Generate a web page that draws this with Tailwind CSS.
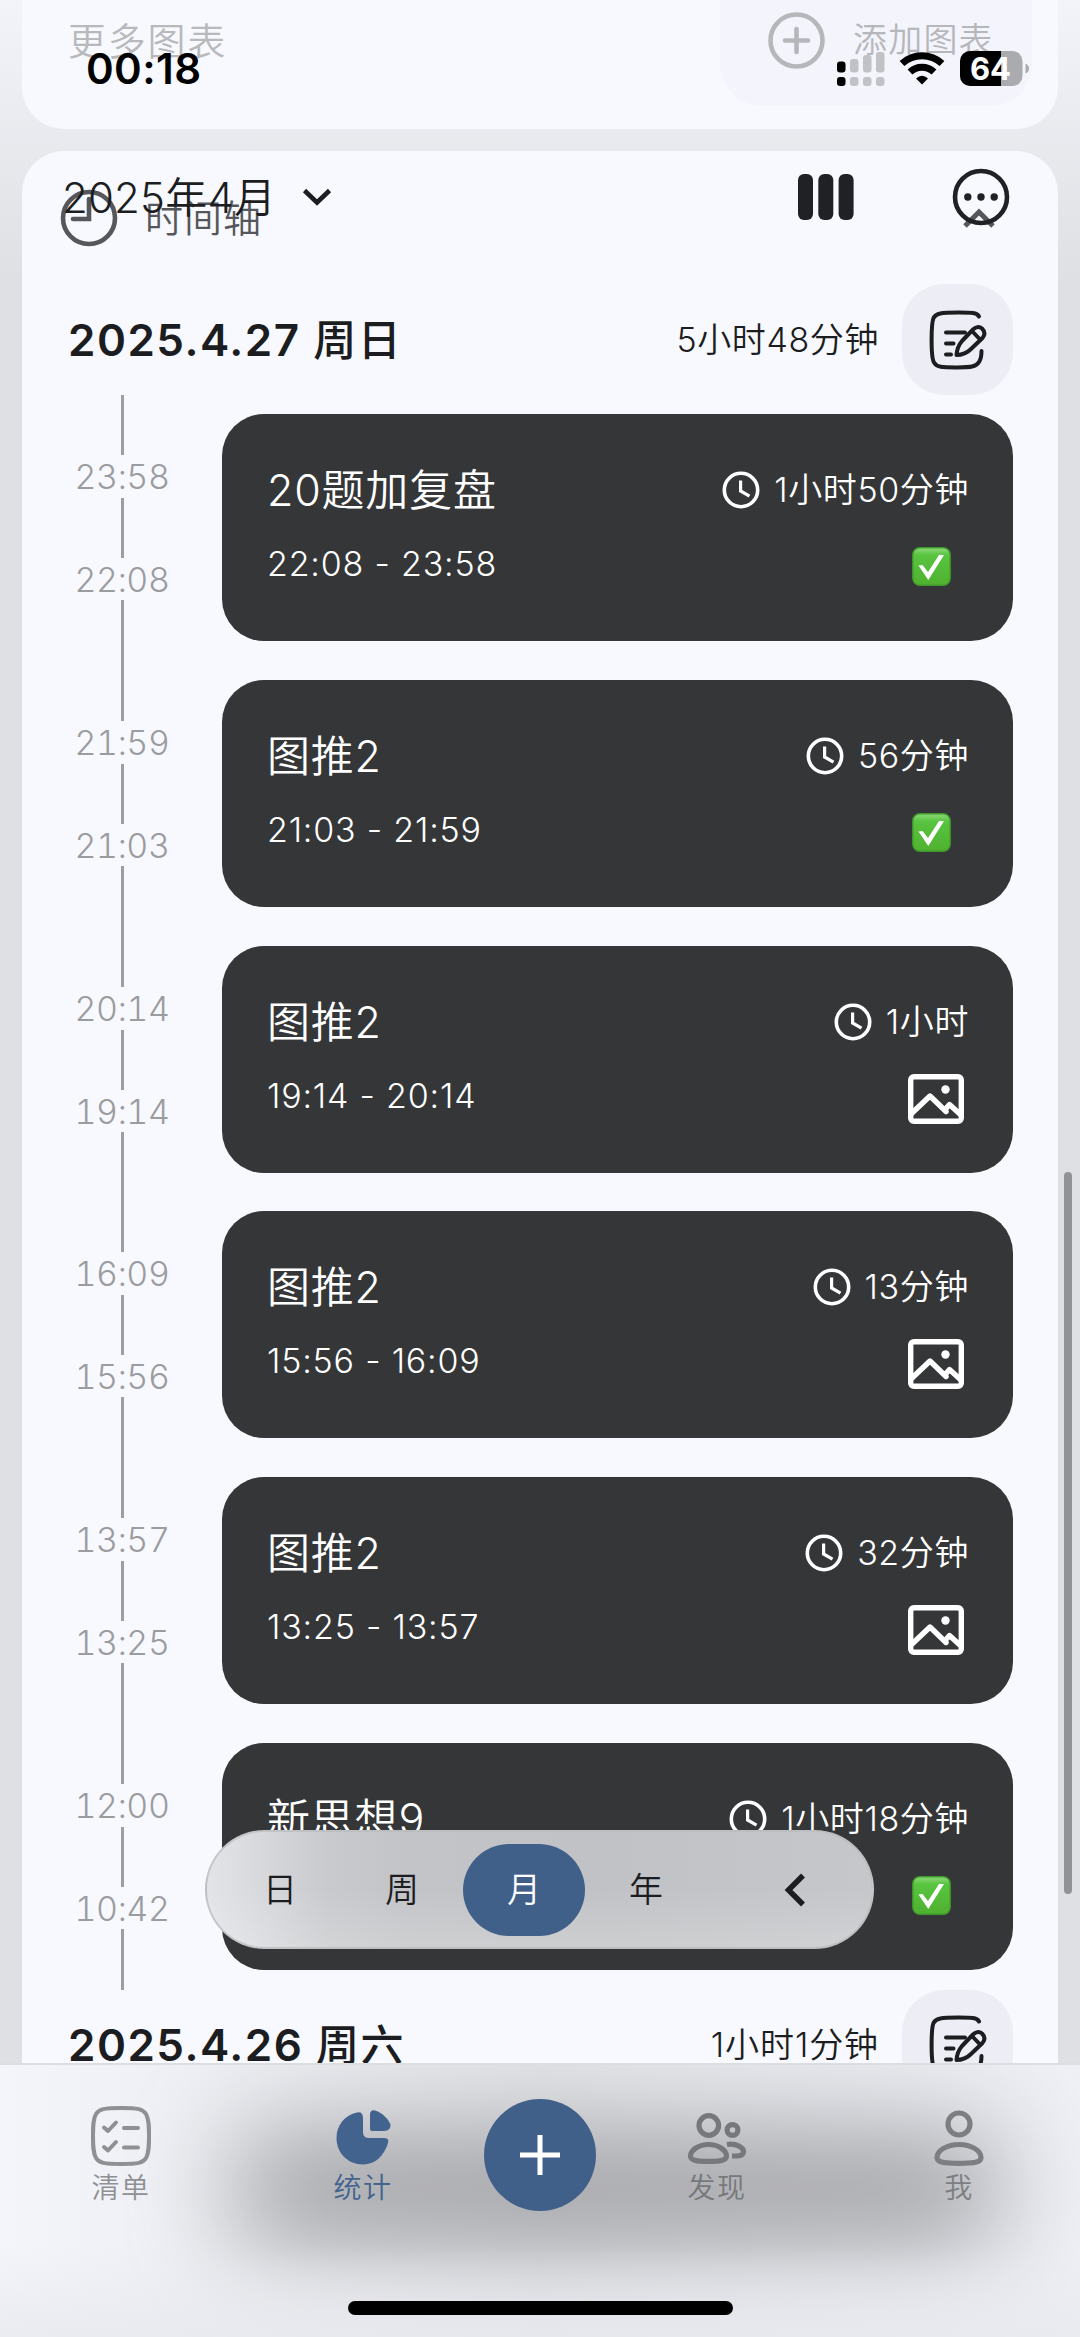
<!DOCTYPE html>
<html lang="zh-CN">
<head>
<meta charset="utf-8">
<meta name="viewport" content="width=device-width">
<title>统计</title>
<script src="https://cdn.jsdelivr.net/npm/@tailwindcss/browser@4"></script>
</head>
<body class="bg-[#dfe0e4]">
<svg class="absolute size-0">
  <defs><linearGradient id="cg" x1="0" y1="0" x2="0" y2="1"><stop offset="0" stop-color="#8fd97d"/><stop offset=".2" stop-color="#58c440"/><stop offset="1" stop-color="#4fb12f"/></linearGradient></defs>
  <symbol id="clock" viewBox="0 0 38 38"><g fill="none" stroke="currentColor" stroke-width="3.6"><circle cx="19" cy="19" r="16.7"/><path d="M18.6 9.5V20L27.5 25.2" stroke-width="3.2"/></g></symbol>
  <symbol id="image" viewBox="0 0 56 50"><g fill="none" stroke="currentColor" stroke-width="5.4"><rect x="2.7" y="2.7" width="50.6" height="44.6" rx="3.2"/><path d="M3 40L22 22L38 37.5" stroke-linejoin="round" stroke-linecap="round"/><path d="M38 34.5L41.5 30.5L53 41" stroke-linejoin="round"/></g><circle cx="37.5" cy="15.5" r="4.2" fill="currentColor"/></symbol>
  <symbol id="check" viewBox="0 0 39 39"><rect x=".8" y=".8" width="37.4" height="37.4" rx="7" fill="url(#cg)" stroke="#3f9a2a" stroke-width="1.4"/><path d="M6.5 18.5L10.5 18L16 25L27 8H32L16.3 33Z" fill="#fff"/></symbol>
  <symbol id="note" viewBox="0 0 58 60"><g fill="none" stroke="currentColor" stroke-width="4" stroke-linecap="round" stroke-linejoin="round"><path d="M50 6.5C48 2.5 42 2.6 29 2.6C12 2.6 7 3 4.500 8C2.800 12 2.600 20 2.600 30C2.600 40 2.800 49 5 52.500C8 57.500 13 57.400 28 57.400C42 57.400 47 57 50 52C52 49 52.500 45 52.500 41"/><path d="M17 22.500H36M17 33.500H24.500M17 44.500H22"/><path d="M27.500 45C28 38 30 34.500 33 31L44 19.500C46.500 17 50 16 53 18.500C56 21.500 56 25 53.500 28L42 39C38 43 34 45 27.500 45ZM43 21L51.500 30"/></g></symbol>
</svg>

<div class="relative h-[2337px] w-[1080px] overflow-hidden bg-linear-to-b from-[#f3f4f9] from-0% via-[#dfe0e4] via-12% to-[#dfe0e4] font-[Inter,'Noto_Sans_CJK_SC',sans-serif] text-[#1c1d21]">

  <!-- scrolling content -->
  <main class="flex flex-col gap-[22px] px-[22px]">
    <section class="flex h-[129px] items-start justify-between rounded-b-[42px] bg-[#f8f9fe] pr-[26px] pl-[46px]">
      <h2 class="mt-[20px] text-[38px] leading-[42px] font-[350] tracking-[1.8px] text-[#b8b9bd]">更多图表</h2>
      <div class="flex h-[106px] w-[312px] items-start gap-[28px] rounded-b-[42px] bg-[#f3f4fc] pl-[48px] text-[#b6b7bb]">
        <svg class="mt-[12px] size-[57px] shrink-0" viewBox="0 0 57 57" fill="none" stroke="currentColor" stroke-linecap="round"><circle cx="28.500" cy="28.500" r="26" stroke-width="4.600"/><path d="M28.500 17V40M17 28.500H40" stroke-width="4.600"/></svg>
        <span class="mt-[19px] text-[34px] leading-[42px] font-[350] tracking-[1.2px] whitespace-nowrap">添加图表</span>
      </div>
    </section>

    <section class="rounded-t-[42px] bg-[#f8f9fe]">
      <div class="flex h-[133px] items-start pl-[38px] text-[#55575b]">
        <svg class="mt-[38px] size-[58px]" viewBox="0 0 58 58" fill="none" stroke="currentColor" stroke-width="4.600"><circle cx="29" cy="29" r="26"/><path d="M29 10V30H13" stroke-linecap="round"/></svg>
        <span class="mt-[46px] ml-[27px] text-[38px] leading-[42px] font-[350] tracking-[1px]">时间轴</span>
        <svg class="mt-[57px] mr-[62px] ml-auto h-[20px] w-[34px]" viewBox="0 0 34 20" fill="none" stroke="currentColor" stroke-width="5"><path d="M3 18L17 4L31 18"/></svg>
      </div>
      <div class="flex h-[111px] items-center pr-[45px] pl-[46px]">
        <h3 class="text-[44px] leading-[50px] font-semibold tracking-[1.500px]">2025.4.27 <span class="text-[43px] font-medium">周日</span></h3>
        <span class="ml-auto text-[34px] leading-[40px] font-[350] tracking-[0.600px]">5小时48分钟</span>
        <span class="ml-[23px] flex size-[111px] items-center justify-center rounded-[42px] bg-[#edeef5]"><svg class="h-[60px] w-[58px]"><use href="#note"/></svg></span>
      </div>
      <div id="timeline"></div>
      <div class="flex h-[111px] items-center pr-[45px] pl-[46px]">
        <h3 class="text-[44px] leading-[50px] font-semibold tracking-[1.500px]">2025.4.26 <span class="text-[43px] font-medium">周六</span></h3>
        <span class="ml-auto text-[34px] leading-[40px] font-[350] tracking-[0.900px]">1小时1分钟</span>
        <span class="ml-[23px] flex size-[111px] items-center justify-center rounded-[42px] bg-[#edeef5]"><svg class="h-[60px] w-[58px]"><use href="#note"/></svg></span>
      </div>
      <div class="h-[300px]"></div>
    </section>
  </main>

  <!-- status bar and translucent title bar -->
  <header class="absolute inset-x-0 top-0">
    <div class="flex h-[138px] items-start pr-[50px] pl-[86px]">
      <span class="mt-[48px] text-[42px] leading-[42px] font-semibold tracking-[0.400px] text-black">00:18</span>
      <svg class="mt-[51px] ml-auto h-[36px] w-[194px]" viewBox="836 51 194 36">
        <g fill="#c1c2c6"><rect x="850" y="59" width="8.500" height="13.500" rx="3"/><rect x="863" y="55" width="8.500" height="17.500" rx="3"/><rect x="876" y="52" width="8.500" height="20.500" rx="3"/><rect x="850" y="77" width="8.500" height="9" rx="3"/><rect x="863" y="77" width="8.500" height="9" rx="3"/><rect x="876" y="77" width="8.500" height="9" rx="3"/></g>
        <rect x="837" y="61.500" width="8.500" height="11" rx="3"/><rect x="837" y="77" width="8.500" height="9" rx="3"/>
        <g fill="none" stroke="#000" stroke-width="7"><path d="M902 63.500A29.500 29.500 0 0 1 942 63.500"/><path d="M910 72A17.500 17.500 0 0 1 934 72"/></g>
        <path d="M916 78.500Q922 73 928 78.500L922 84.500Z"/>
        <clipPath id="bat"><rect x="960" y="51" width="62.500" height="35" rx="10"/></clipPath>
        <g clip-path="url(#bat)"><rect x="960" y="51" width="63" height="35" fill="#aaabae"/><rect x="960" y="51" width="41" height="35"/></g>
        <path d="M1025.500 63.500Q1029 65 1029 68.500T1025.500 73.500Z" fill="#aaabae"/>
        <text x="990.500" y="79.500" text-anchor="middle" fill="#fff" font-family="Inter" font-weight="700" font-size="31">64</text>
      </svg>
    </div>
    <div class="flex h-[117px] items-center pr-[70px] pl-[62px]">
      <h1 class="w-[214px] pt-[3px] text-[42px] leading-[50px] font-[350] tracking-[0.200px] whitespace-nowrap">2025年4月</h1>
      <svg class="ml-[26px] h-[18px] w-[30px]" viewBox="0 0 30 18" fill="none" stroke="currentColor" stroke-width="4.600"><path d="M2.500 2.500L15 14.500L27.500 2.500"/></svg>
      <svg class="ml-auto h-[46px] w-[56px]" viewBox="0 0 56 46" fill="#202124"><rect width="15" height="46" rx="6"/><rect x="20.300" width="15" height="46" rx="6"/><rect x="40.600" width="15" height="46" rx="6"/></svg>
      <svg class="ml-[98px] size-[58px]" viewBox="0 0 58 58" fill="#202124"><circle cx="29" cy="29" r="26" fill="none" stroke="#202124" stroke-width="4.600"/><circle cx="15.800" cy="29" r="3.700"/><circle cx="29" cy="29" r="3.700"/><circle cx="42.200" cy="29" r="3.700"/></svg>
    </div>
  </header>

  <!-- scroll indicator -->
  <div class="absolute top-[1172px] right-[8px] h-[722px] w-[8px] rounded-full bg-[#919295]"></div>

  <!-- floating period switch -->
  <div class="absolute top-[1830px] left-[205px] flex h-[119px] w-[669px] items-center overflow-hidden rounded-full border-2 border-[#b9babd]/70 bg-[linear-gradient(90deg,#e3e4e8_0%,#dcdde1_5%,#c9cacd_18%,#c3c4c7_30%,#c1c2c5_60%,#c6c7ca_100%)] pl-[12px]">
    <div class="absolute inset-0 bg-linear-to-b from-white/0 from-50% to-white/20"></div>
    <div class="relative grid grid-cols-4 text-center text-[34px] leading-[92px] font-[350]">
      <span class="w-[122px]">日</span><span class="w-[122px]">周</span><span class="w-[122px] rounded-[46px] bg-[#40608a] text-white">月</span><span class="w-[122px]">年</span>
    </div>
    <svg class="relative ml-[77px] h-[34px] w-[22px]" viewBox="0 0 22 34" fill="none" stroke="currentColor" stroke-width="5.500"><path d="M19 2.500L4.500 17L19 31.500"/></svg>
  </div>

  <!-- tab bar -->
  <nav class="absolute inset-x-0 bottom-0 h-[274px] overflow-hidden border-t-2 border-[#dcdde1] bg-linear-to-r from-[#f4f5fa] via-[#e4e5e9] to-[#eff0f6]">
    <div class="absolute top-[68px] left-[230px] h-[112px] w-[775px] rounded-[50px] bg-[#808184]/70 blur-[50px]"></div>
    <div class="absolute inset-x-0 bottom-0 h-[90px] bg-linear-to-b from-[#e8e9ee]/0 to-[#e8e9ee]/80"></div>
    <div class="relative flex h-[150px] items-start pt-[41px] text-[28px] leading-[32px] font-[350] tracking-[1.500px] text-[#8f9093]">
      <div class="flex w-[242px] flex-col items-center gap-[6px]">
        <svg class="size-[60px]" viewBox="0 0 60 60" fill="none" stroke="currentColor" stroke-width="4" stroke-linecap="round" stroke-linejoin="round"><path d="M30 2C13 2 8 3 5 8C2 13 2 20 2 30S2 47 5 52C8 57 13 58 30 58S52 57 55 52C58 47 58 40 58 30S58 13 55 8C52 3 47 2 30 2Z"/><path d="M13 21.500L17 25L25 16.500M33 22H47M13 41L17 44.500L25 36M33 41.500H47"/></svg>
        <span>清单</span>
      </div>
      <div class="flex w-[242px] flex-col items-center gap-[6px] text-[#43638f]">
        <svg class="size-[60px]" viewBox="0 0 60 60" fill="currentColor"><path d="M24 6.500Q30 5.500 30 12V26Q30 32 36 32H51Q56.500 32 55 37C51 50 42 58.500 30 58.500C15 58.500 3.500 47 3.500 32C3.500 19 12 9 24 6.500Z"/><path d="M37 9Q37 3.500 42 4.500C50 7 55 13 57.500 18.500Q58 25 51 25H39Q37 25 37 23Z"/></svg>
        <span>统计</span>
      </div>
      <div class="-mt-[7px] flex size-[112px] items-center justify-center rounded-full bg-[#40608a]">
        <svg class="size-[40px]" viewBox="0 0 40 40" stroke="#fff" stroke-width="5"><path d="M20 0V40M0 20H40"/></svg>
      </div>
      <div class="flex w-[242px] flex-col items-center gap-[6px] text-[#77787b]">
        <svg class="size-[60px]" viewBox="0 0 60 60" fill="none" stroke="currentColor" stroke-width="5.200"><circle cx="21.800" cy="19.500" r="9.800"/><circle cx="45.500" cy="24" r="5.400"/><path d="M21.500 38.500C12 38.500 3.500 44 3.500 50C3.500 54.500 10 55.400 21.500 55.400S39.500 54.500 39.500 50C39.500 44 31 38.500 21.500 38.500Z"/><path d="M40 38.500C50 37 56.500 42 56.500 45.500C56.500 50 52 50 45 50"/></svg>
        <span>发现</span>
      </div>
      <div class="flex w-[242px] flex-col items-center gap-[6px] text-[#7d7e81]">
        <svg class="size-[60px]" viewBox="0 0 60 60" fill="none" stroke="currentColor" stroke-width="5.200"><circle cx="30" cy="18" r="11"/><path d="M30 38.500C18 38.500 8 44.500 8 51.500C8 56.500 15 57.400 30 57.400S52 56.500 52 51.500C52 44.500 42 38.500 30 38.500Z"/></svg>
        <span>我</span>
      </div>
    </div>
    <div class="absolute bottom-[22px] left-[348px] h-[14px] w-[385px] rounded-full bg-black"></div>
  </nav>
</div>

<script>
const entries = [
  ["20题加复盘", "22:08", "23:58", "1小时50分钟", "check"],
  ["图推2", "21:03", "21:59", "56分钟", "check"],
  ["图推2", "19:14", "20:14", "1小时", "image"],
  ["图推2", "15:56", "16:09", "13分钟", "image"],
  ["图推2", "13:25", "13:57", "32分钟", "image"],
  ["新思想9", "10:42", "12:00", "1小时18分钟", "check"],
];
document.getElementById("timeline").innerHTML = entries.map(([title, start, end, length, icon]) => `
  <div class="flex h-[265.800px] pr-[45px]">
    <div class="flex w-[200px] flex-col items-center text-[34px] leading-[44px] tracking-[-0.400px] font-[350] tabular-nums text-[#9b9ca0]">
      <i class="h-[60px] w-[3px] bg-[#9d9ea2]"></i><span class="h-[43px]">${end}</span>
      <i class="h-[60px] w-[3px] bg-[#9d9ea2]"></i><span class="h-[42px]">${start}</span>
      <i class="w-[3px] grow bg-[#9d9ea2]"></i>
    </div>
    <div class="mt-[19px] flex h-[227px] grow flex-col rounded-[42px] bg-[#353638] px-[45px] pt-[50px] text-white">
      <div class="flex h-[52px] items-center">
        <span class="text-[43px] leading-[52px] tracking-[0.800px] font-[350]">${title}</span>
        <svg class="mr-[14px] ml-auto size-[38px]"><use href="#clock"/></svg>
        <span class="-mr-[1px] text-[34px] leading-[40px] tracking-[0.600px] font-[350]">${length}</span>
      </div>
      <div class="flex h-[50px] items-start justify-between">
        <span class="mt-[26px] text-[34px] leading-[44px] tracking-[0.800px] font-[350]">${start} - ${end}</span>
        ${icon === "check"
          ? '<svg class="mt-[31px] mr-[17px] size-[39px]"><use href="#check"/></svg>'
          : '<svg class="mt-[26px] mr-[4px] h-[50px] w-[56px]"><use href="#image"/></svg>'}
      </div>
    </div>
  </div>`).join("");
</script>
</body>
</html>
